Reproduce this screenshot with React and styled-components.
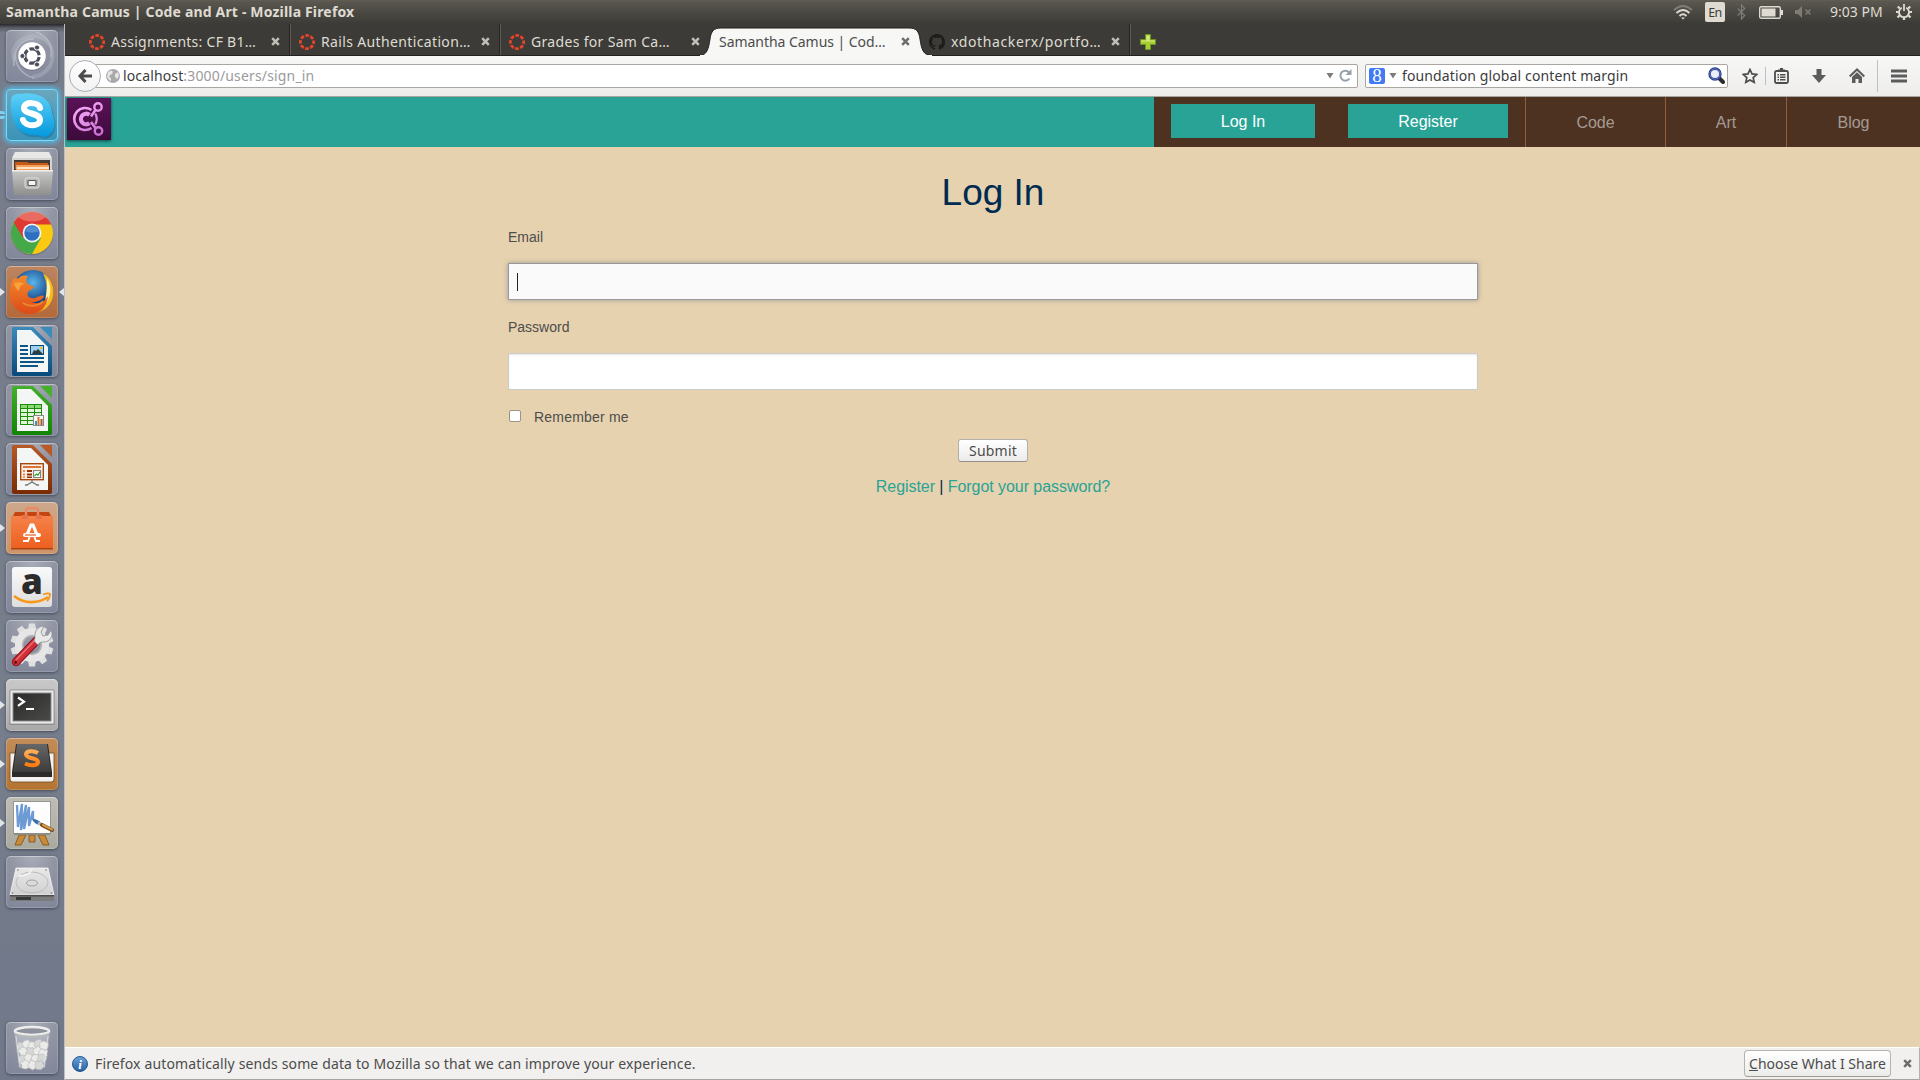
import React from 'react';
import styled, { createGlobalStyle } from 'styled-components';

const Global = createGlobalStyle`
  *, *::before, *::after { box-sizing: border-box; }
  html, body { margin: 0; padding: 0; }
  body { overflow: hidden; background: #e6d2af; }
  svg { display: block; flex: none; }
`;

const ui = `"Noto Sans", "Open Sans", sans-serif`;
const page = `"Liberation Sans", Arial, sans-serif`;

const Screen = styled.div`
  width: 1920px;
  height: 1080px;
  display: flex;
  flex-direction: column;
  font-family: ${ui};
  font-size: 14px;
  line-height: 20px;
`;

const Label = styled.span`
  font-size: ${(p) => p.$size || 14}px;
  letter-spacing: ${(p) => p.$track || 0}px;
  color: ${(p) => p.$color || 'inherit'};
  font-weight: ${(p) => p.$weight || 400};
  white-space: nowrap;
  flex: none;
`;

/* ---------- top panel ---------- */

const Panel = styled.header`
  height: 24px;
  flex: none;
  display: flex;
  align-items: center;
  padding: 0 8px 0 6px;
  color: #dfdbd2;
  background: linear-gradient(#65624f 0, #5a5850 1px, #4b4943 12px, #3c3b37 24px);
`;

const Tray = styled.div`
  margin-left: auto;
  display: flex;
  align-items: center;
`;

const TraySlot = styled.div`
  width: ${(p) => p.$w}px;
  height: 24px;
  display: flex;
  align-items: center;
`;

const Lang = styled.div`
  width: 20px;
  height: 20px;
  margin-top: -1px;
  border-radius: 2px;
  background: #dfdbd2;
  color: #3c3b37;
  font-size: 12.5px;
  letter-spacing: -0.6px;
  line-height: 21px;
  text-align: center;
`;

const Below = styled.div`
  flex: 1;
  display: flex;
  min-height: 0;
`;

/* ---------- launcher ---------- */

const Launcher = styled.aside`
  width: 65px;
  flex: none;
  display: flex;
  flex-direction: column;
  gap: 7px;
  padding: 6px 0 6px 6px;
  border-right: 1px solid #b9bfca;
  background: linear-gradient(#26272a 0, #5b606a 4px, #777d8b 9px, #767d8b 70%, #70788a 100%);
`;

const Tile = styled.div`
  position: relative;
  width: 52px;
  height: 52px;
  flex: none;
  border-radius: 5px;
  background: ${(p) => p.$bg || 'radial-gradient(circle at 50% 0, #a9adb8 0, #9195a3 40%, #80859a 100%)'};
  box-shadow: ${(p) =>
    p.$glow
      ? 'inset 0 0 0 1px #7fd6f5, 0 0 5px 2px #4fb9e4'
      : 'inset 0 0 0 1px rgba(255,255,255,0.17), inset 0 1px 0 rgba(255,255,255,0.25), 0 1px 3px rgba(30,34,48,0.55)'};
  margin-top: ${(p) => (p.$last ? 'auto' : 0)};
`;

const Pip = styled.i`
  position: absolute;
  top: 22px;
  left: ${(p) => (p.$right ? 'auto' : '-6px')};
  right: ${(p) => (p.$right ? '-6px' : 'auto')};
  border: 4px solid transparent;
  border-left: ${(p) => (p.$right ? '0' : '5px solid #e3e4e8')};
  border-right: ${(p) => (p.$right ? '5px solid #e3e4e8' : '0')};
`;

const Bars = styled.i`
  position: absolute;
  top: 22px;
  left: -6px;
  width: 5px;
  height: 8px;
  border: solid #7ed2f0;
  border-width: 3px 0;
  border-radius: 0 3px 3px 0;
`;

const Art = ({ children }) => (
  <svg width="52" height="52" viewBox="0 0 52 52">{children}</svg>
);

const Grad = ({ id, a, b, x2 = 0, y2 = 1 }) => (
  <linearGradient id={id} x1="0" y1="0" x2={x2} y2={y2}>
    <stop offset="0" stopColor={a} />
    <stop offset="1" stopColor={b} />
  </linearGradient>
);

const UbuntuIcon = () => (
  <Art>
    <g fill="none" stroke="#d4d6df" opacity="0.5">
      <path d="M8 30C4 12 22 2 36 8c8 4 12 12 10 22-2 10-10 16-20 17" strokeWidth="4" opacity=".5" />
      <path d="M30 2c12 4 17 14 15 25M10 20c-3 14 6 25 18 28M8 36C6 20 16 8 28 9" strokeWidth="1.6" />
    </g>
    <circle cx="26" cy="27" r="14" fill="#5f6270" opacity=".35" />
    <circle cx="26" cy="26" r="13.8" fill="#fff" />
    <circle cx="26" cy="26" r="7.2" fill="none" stroke="#4d4e5c" strokeWidth="3.2" strokeDasharray="13 2.08" strokeDashoffset="-1" />
    <g fill="#4d4e5c" stroke="#fff" strokeWidth="1">
      <circle cx="16.4" cy="26" r="2.6" />
      <circle cx="31" cy="17.5" r="2.6" />
      <circle cx="31" cy="34.5" r="2.6" />
    </g>
  </Art>
);

const SkypeIcon = () => (
  <Art>
    <defs><Grad id="sk" a="#5fd0f7" b="#0499dd" /></defs>
    <path d="M5 15C3 8 8 4 15 5c4-1 8-1 12 0 11 1 19 9 19 19 3 8 4 14 0 20-3 5-9 6-14 3C20 49 9 42 7 29 5 24 5 20 5 15z" fill="#1b6d94" opacity=".5" transform="translate(1 1)" />
    <path d="M5 13C4 7 9 4 15 5c4-1 8-1 12 0 11 1 19 9 19 19 3 8 4 14 0 19-3 5-9 6-14 3C20 48 9 41 7 29 5 23 4 18 5 13z" fill="url(#sk)" />
    <path d="M34 19C33 13 18 12 18 19c0 7 16 4 16 12 0 7-15 7-17 0" fill="none" stroke="#fff" strokeWidth="6" strokeLinecap="round" />
  </Art>
);

const FilesIcon = () => (
  <Art>
    <defs><Grad id="fl" a="#c9c9c7" b="#8f8f8d" /></defs>
    <path d="M9 4h34l3 6v12H6V10z" fill="#e8e8e6" />
    <path d="M6 10h40v12H6z" fill="#d4d4d1" />
    <path d="M8 12h36v12H8z" fill="#453b36" />
    <path d="M9 14h12l2 1h19v6H9z" fill="#c65a16" />
    <path d="M10 17h33v6H10z" fill="#f2a15c" />
    <path d="M11 19h32v2H11z" fill="#fde3c4" />
    <path d="M6 22h41l-2 25H8z" fill="url(#fl)" />
    <path d="M6 22h41v1.5H6z" fill="#eee" />
    <rect x="19" y="30" width="14" height="10" rx="2" fill="#b4b4b2" stroke="#dededc" />
    <rect x="22" y="32.5" width="8" height="5" rx="1" fill="#f3f3f2" stroke="#595959" strokeWidth="1.2" />
  </Art>
);

const ChromeIcon = () => (
  <Art>
    <circle cx="26" cy="27.5" r="21" fill="#444" opacity=".3" />
    <circle cx="26" cy="26" r="21" fill="#fbc90f" />
    <path d="M26 26L7.8 15.5A21 21 0 0 0 26 47l9-16z" fill="#45a94a" />
    <path d="M7.8 15.5A21 21 0 0 1 45.3 17.5H26L17 31z" fill="#df3a32" />
    <path d="M12 10a21 21 0 0 1 28 0c-8 6-20 6-28 0z" fill="#f08a80" opacity=".6" />
    <circle cx="26" cy="26" r="9.4" fill="#f3f3f3" />
    <circle cx="26" cy="26" r="7.7" fill="#2d6fc0" />
    <path d="M19 24a7.5 7.5 0 0 1 14 0c-4 2-10 2-14 0z" fill="#6ea4dd" opacity=".6" />
  </Art>
);

const FirefoxIcon = () => (
  <Art>
    <defs>
      <radialGradient id="fb" cx=".5" cy=".3"><stop offset="0" stopColor="#5ab6e8" /><stop offset="1" stopColor="#123a82" /></radialGradient>
      <Grad id="ff" a="#f58a2c" b="#dc4a18" />
    </defs>
    <ellipse cx="27" cy="25" rx="20.5" ry="21" fill="url(#fb)" />
    <path d="M37 7c7 4 10 11 10.500 17C48 37 40 46 27 47c8-4 13-9 14-16 1-8-1-17-4-24z" fill="#f6b820" />
    <path d="M41 12c3 5 4 10 3 16-1 5-3 9-6 12 2-8 3-17 3-28z" fill="#fff3a8" />
    <path d="M7 13c2-1 4 0 6-1 2-3 6-3 9-2-2 2-2 4-1 7 2 3 6 2 7 4 0 2-5 3-6 5-2 4 2 7 7 6 4-2 8-3 9-2-1 4-7 6-12 6 7 3 12 0 16-6-1 11-8 18-18 18C12 48 4 39 4 28c0-6 1-11 3-15z" fill="url(#ff)" />
    <path d="M8 17c3-1 8-1 10 1-3 1-5 3-5 7-3-2-4-4-5-8z" fill="#f9a13a" />
    <path d="M17 37c6 4 15 4 20-2" stroke="#f9a13a" strokeWidth="2" fill="none" opacity=".6" />
  </Art>
);

const Doc = ({ id, dark, light, children }) => (
  <Art>
    <defs><Grad id={id} a={light} b={dark} /></defs>
    <path d="M7 2h20l19 19v28a2 2 0 0 1-2 2H8a2 2 0 0 1-2-2V3z" fill={`url(#${id})`} />
    <path d="M34 2h12v12z" fill={light} />
    <path d="M11 5h14l17 17v25H11z" fill="#f4f5f5" />
    {children}
  </Art>
);

const WriterIcon = () => (
  <Doc id="wr" dark="#084a7a" light="#3c8bbd">
    <g fill="#0e5688">
      <path d="M14 20h8v2h-8zM14 24h8v2h-8zM14 28h8v2h-8zM14 32h24v2H14zM14 36h24v2H14zM14 40h18v2H14z" />
    </g>
    <rect x="24.5" y="20.5" width="13" height="9" fill="#9cd0ee" stroke="#084a7a" />
    <path d="M26 29l2-4 2 1 2-2 2 2 3 3z" fill="#2f3a40" />
    <circle cx="35" cy="23" r="1.3" fill="#f5bc2a" />
  </Doc>
);

const CalcIcon = () => (
  <Doc id="ca" dark="#118402" light="#44b02d">
    <rect x="14" y="20" width="22" height="21" fill="#1c8c0c" />
    {[0, 1, 2, 3, 4].map((r) =>
      [0, 1, 2].map((c) => <rect key={`${r}${c}`} x={15 + c * 7} y={21 + r * 4} width="6" height="3" fill={r === 0 ? '#8fd878' : '#dff7d6'} />)
    )}
    <rect x="27.5" y="31.5" width="10" height="10" fill="#f6f6f6" stroke="#8a8a8a" />
    <path d="M29 37h2v4h-2z" fill="#3c8dc8" />
    <path d="M31.5 33h2v8h-2z" fill="#e0701c" />
    <path d="M34.5 35h2v6h-2z" fill="#9a5a2e" />
  </Doc>
);

const ImpressIcon = () => (
  <Doc id="im" dark="#7a2a02" light="#b75a28">
    <rect x="14.7" y="20.7" width="22.6" height="16" fill="#fdeee4" stroke="#a5450f" strokeWidth="1.4" />
    <path d="M17 23h18v2H17z" fill="#d9763c" />
    <path d="M17 27h2v2h-2zM17 30.5h2v2h-2zM17 33.5h2v1.5h-2z" fill="#e28a54" />
    <path d="M21 27h5v2h-5zM21 30.5h5v2h-5zM21 33.5h5v1.5h-5z" fill="#8b3509" />
    <rect x="27.6" y="27.6" width="7" height="7" fill="#fff" stroke="#777" />
    <path d="M28.5 33l2-2 1.5 1 2-3" stroke="#32a32a" strokeWidth="1.3" fill="none" />
    <path d="M26 37v3M21 42l5-3 5 3M19 42h3M30 42h3" stroke="#777" strokeWidth="1.4" fill="none" />
  </Doc>
);

const SoftwareIcon = () => (
  <Art>
    <defs><Grad id="so" a="#f5824a" b="#ee5f1e" /></defs>
    <path d="M7 14l2-4h34l2 4z" fill="#c44512" />
    <path d="M5 14h42v33H5z" fill="url(#so)" />
    <path d="M5 46h42v1.5H5z" fill="#a84412" />
    <path d="M20 15V9q0-3 3-3h6q3 0 3 3v6" fill="none" stroke="#e98a66" strokeWidth="2.4" />
    <path d="M16 13h6v4h-6zM30 13h6v4h-6z" fill="#e4734a" />
    <path d="M20.500 34L25 23h2l4.500 11" fill="none" stroke="#fff" strokeWidth="3.2" />
    <rect x="17" y="31" width="18" height="4" rx="2" fill="#fff" />
    <path d="M17 39h5l1.500-4M34 39h-4l-1.500-4" stroke="#fff" strokeWidth="2" fill="none" />
    <path d="M19 33h11" stroke="#ee6a2b" strokeWidth="1.3" />
  </Art>
);

const AmazonIcon = () => (
  <Art>
    <defs><Grad id="am" a="#fafafa" b="#dedede" /></defs>
    <rect x="6" y="6" width="40" height="40" rx="3" fill="url(#am)" />
    <text x="26" y="33" fontFamily="Open Sans, sans-serif" fontWeight="800" fontSize="35" textAnchor="middle" fill="#2b2b2b">a</text>
    <path d="M8 35c10 8 24 8 34 1" fill="none" stroke="#f7981d" strokeWidth="2.6" />
    <path d="M37 33.5c3-1 6-1.500 7-.5 0 2-1 5-3 7" fill="none" stroke="#f7981d" strokeWidth="1.8" />
  </Art>
);

const SettingsIcon = () => (
  <Art>
    <g transform="translate(26 25)">
      <g fill="#e0e0e0">
        {[0, 36, 72, 108, 144, 180, 216, 252, 288, 324].map((a) => (
          <path key={a} d="M-4-15L-3-21.500h6L4-15z" transform={`rotate(${a})`} />
        ))}
      </g>
      <circle r="13" fill="none" stroke="#e6e6e6" strokeWidth="8" />
      <circle r="9.5" fill="none" stroke="#b4b4b4" strokeWidth="1.4" />
    </g>
    <path d="M10 42L33 18" stroke="#8c1019" strokeWidth="8.4" strokeLinecap="round" />
    <path d="M10 42L31 20" stroke="#cf2f37" strokeWidth="6.4" strokeLinecap="round" />
    <path d="M10 40L30 19" stroke="#ee7076" strokeWidth="1.4" />
    <circle cx="9.6" cy="42.4" r="1.4" fill="#5a0b10" />
    <path d="M29 18c-1-7 3-12 9-12l-3 6 2 4 5-1 3-5c3 6-1 12-7 12-3 0-4 0-6 3l-4-4z" fill="#e9e9e9" stroke="#8d8d8d" strokeWidth=".8" />
  </Art>
);

const TerminalIcon = () => (
  <Art>
    <defs><Grad id="te" a="#2a2a2a" b="#4a4a48" x2={1} /></defs>
    <path d="M4 11h44v31l1 4H3l1-4z" fill="#9a9a9a" />
    <rect x="4" y="11" width="44" height="34" rx="1" fill="#ebebeb" stroke="#777" strokeWidth=".7" />
    <rect x="7" y="14" width="38" height="28" fill="url(#te)" stroke="#888" />
    <path d="M12 18.5l6 4.2-6 4.2" fill="none" stroke="#fff" strokeWidth="2.2" />
    <path d="M20 30h8" stroke="#fff" strokeWidth="2" />
  </Art>
);

const SublimeIcon = () => (
  <Art>
    <defs><Grad id="su" a="#666" b="#3c3c3c" /><Grad id="ss" a="#ffae55" b="#ff7b0c" /></defs>
    <path d="M4 15h44v26a3 3 0 0 1-3 3H7a3 3 0 0 1-3-3z" fill="#f2f1ef" stroke="#6b4a26" strokeWidth=".8" />
    <path d="M10 6h32l4 28v5H6v-5z" fill="#2a2a2a" />
    <path d="M11 6h30l4 28H7z" fill="url(#su)" />
    <path d="M32 15c-5-3-12-2-12 1.500 0 4.500 12 3 12 7.500 0 4-8 4-13 1.500" fill="none" stroke="url(#ss)" strokeWidth="4" />
  </Art>
);

const PaintIcon = () => (
  <Art>
    <path d="M13 38h7l-5 10H9zM32 38h7l4 10h-6zM23 38h6v7h-6z" fill="#c98a3b" stroke="#7d4f16" strokeWidth=".8" />
    <rect x="7.5" y="4.5" width="37" height="32" fill="#fdfdfd" stroke="#96968f" />
    <path d="M8 36h36v2H8z" fill="#8d8d86" />
    <path d="M11 8l1 22 4-23-1 26 5-25-2 24 5-22 0 19 4-15v8" fill="none" stroke="#6b9ad4" strokeWidth="2.3" strokeLinejoin="bevel" />
    <path d="M26 22c4 0 9 2 9 5-3 2-7-1-9-5z" fill="#3a6ea8" />
    <path d="M32 26l5 2" stroke="#b3bac0" strokeWidth="3.4" />
    <path d="M36 28l10 5" stroke="#7d4f16" strokeWidth="4" strokeLinecap="round" />
    <path d="M37 28l9 4.5" stroke="#d3994d" strokeWidth="2" strokeLinecap="round" />
  </Art>
);

const DiskIcon = () => (
  <Art>
    <defs><Grad id="dk" a="#e8e8e8" b="#d0d0d0" /></defs>
    <path d="M10 12h32l6 27H4z" fill="url(#dk)" stroke="#f5f5f5" strokeWidth=".8" />
    <path d="M4 39h44v6H4z" fill="#7b7b7b" />
    <path d="M4 39h44v1.5H4z" fill="#4c4c4c" />
    <path d="M10 41h15v3H10z" fill="#383838" />
    <ellipse cx="26" cy="26.5" rx="16" ry="10.5" fill="none" stroke="#bcbcbc" />
    <ellipse cx="26" cy="27" rx="5.5" ry="3" fill="#dadada" stroke="#a3a3a3" />
    <path d="M12 20c6 0 12-1 14-7" stroke="#f6f6f6" strokeWidth="1.4" fill="none" />
    <g fill="#777"><circle cx="12" cy="14" r=".8" /><circle cx="40" cy="14" r=".8" /><circle cx="6.5" cy="37" r=".8" /><circle cx="45.5" cy="37" r=".8" /></g>
  </Art>
);

const CRUMPLES = [
  [15, 24], [21, 22], [27, 24], [33, 22], [38, 24], [17, 30], [24, 30], [31, 29], [37, 31],
  [17, 37], [23, 36], [30, 37], [36, 37], [19, 43], [26, 43], [33, 43],
];

const TrashIcon = () => (
  <Art>
    <path d="M8 9h36l-5 37H13z" fill="#c9ced6" opacity=".5" />
    {CRUMPLES.map(([x, y], i) => (
      <path
        key={i}
        transform={`translate(${x} ${y}) rotate(${i * 47})`}
        d="M-4-1l2-3 3 1 3-1v4l1 2-4 3-3-1-2-1z"
        fill={i % 3 ? '#ebebe9' : '#d7d8d6'}
        stroke="#b9bcba"
        strokeWidth=".6"
      />
    ))}
    <path d="M10 14l4 31M42 14l-4 31" stroke="#eef0f3" strokeWidth=".9" opacity=".7" />
    <ellipse cx="26" cy="9" rx="17" ry="4" fill="#8c929c" stroke="#eeeeec" strokeWidth="2.6" />
    <path d="M8.500 10.500c5 4 30 4 35 0v1.500c-5 4.500-30 4.500-35 0z" fill="#b7bab9" />
  </Art>
);

const LAUNCHER = [
  { icon: UbuntuIcon },
  { icon: SkypeIcon, bg: 'linear-gradient(#6ba7bd, #3a93b8)', glow: true },
  { icon: FilesIcon },
  { icon: ChromeIcon },
  { icon: FirefoxIcon, bg: 'linear-gradient(#bc8560, #b3693a)', pips: 2 },
  { icon: WriterIcon },
  { icon: CalcIcon },
  { icon: ImpressIcon },
  { icon: SoftwareIcon, bg: 'linear-gradient(#cda88c, #cd9467)', pips: 1 },
  { icon: AmazonIcon },
  { icon: SettingsIcon },
  { icon: TerminalIcon, bg: 'linear-gradient(#c9c9c9, #a9a9a9)', pips: 1 },
  { icon: SublimeIcon, bg: 'linear-gradient(#c28c5a, #b57531)', pips: 1 },
  { icon: PaintIcon, bg: 'linear-gradient(#bdbdb6, #aaaaa0)', pips: 1 },
  { icon: DiskIcon },
  { icon: TrashIcon, last: true },
];

/* ---------- browser ---------- */

const Browser = styled.div`
  flex: 1;
  display: flex;
  flex-direction: column;
  min-width: 0;
`;

const TabStrip = styled.div`
  height: 32px;
  flex: none;
  display: flex;
  padding-left: 16px;
  background: #3c3b37;
  border-bottom: 1px solid #22211f;
`;

const Tab = styled.div`
  position: relative;
  width: 210px;
  height: ${(p) => (p.$active ? 32 : 31)}px;
  display: flex;
  align-items: center;
  padding: 4px 0 0 8px;
  color: ${(p) => (p.$active ? '#4c4c4c' : '#dfdbd2')};
  border-right: ${(p) => (p.$plain ? '0' : '1px solid #5e5c53')};
  box-shadow: ${(p) => (p.$plain ? 'none' : 'inset -1px 0 #272623')};
`;

const TabShape = styled.svg`
  position: absolute;
  left: -12px;
  top: 3px;
`;

const TabText = styled(Label)`
  position: relative;
  margin-left: ${(p) => (p.$flush ? 0 : 6)}px;
`;

const TabClose = styled.span`
  position: absolute;
  left: 190px;
  top: 13px;
`;

const NewTab = styled.div`
  padding: 10px 0 0 9px;
`;

const Toolbar = styled.div`
  height: 41px;
  flex: none;
  display: flex;
  align-items: center;
  padding: 0 13px 1px 4px;
  background: linear-gradient(#f7f7f6, #eeedec);
  border-bottom: 1px solid #a9a6a1;
`;

const Back = styled.div`
  position: relative;
  width: 32px;
  height: 32px;
  border-radius: 50%;
  border: 1px solid #a9b0b8;
  background: linear-gradient(#fff, #f2f2f2);
  display: flex;
  align-items: center;
  justify-content: center;
  z-index: 1;
`;

const Field = styled.div`
  height: 24px;
  width: ${(p) => p.$w}px;
  margin-left: ${(p) => p.$ml}px;
  padding: 0 ${(p) => p.$pr}px 0 ${(p) => p.$pl}px;
  display: flex;
  align-items: center;
  background: #fff;
  border: 1px solid #aaa7a3;
  border-radius: 2px;
  color: #3c3c3c;
`;

const Google = styled.span`
  width: 16px;
  height: 16px;
  border-radius: 2px;
  background: #4279f4;
  color: #fff;
  font: 19px/15px "Liberation Serif", serif;
  text-align: center;
`;

const Gap = styled.span`
  width: ${(p) => p.$w}px;
  flex: none;
`;

const Push = styled.span`
  flex: 1;
`;

const Rule = styled.span`
  width: 1px;
  height: ${(p) => p.$h}px;
  background: #b8c2cf;
`;

/* ---------- page ---------- */

const Page = styled.main`
  flex: 1;
  background: #e6d2af;
  font-family: ${page};
`;

const SiteNav = styled.nav`
  height: 50px;
  display: flex;
  background: #29a396;
`;

const Brand = styled.div`
  width: 44px;
  height: 42px;
  margin: 1px 0 0 2px;
  background: linear-gradient(#5a1257, #3d0a3b);
  box-shadow: 0 1px 3px rgba(0, 0, 0, 0.6);
`;

const NavSide = styled.div`
  width: 766px;
  margin-left: auto;
  display: flex;
  background: #4d3222;
  font-size: 16px;
`;

const NavButton = styled.a`
  width: ${(p) => p.$w}px;
  height: 34px;
  margin: 7px ${(p) => p.$mr}px 0 17px;
  background: #29a396;
  color: #fff;
  line-height: 35px;
  text-align: center;
`;

const NavLink = styled.a`
  width: ${(p) => p.$w}px;
  border-left: 1px solid #935d3c;
  color: #a59a92;
  line-height: 51px;
  text-align: center;
`;

const Form = styled.form`
  width: 970px;
  margin: 0 0 0 443px;
  display: flex;
  flex-direction: column;
  font-size: 14px;
  line-height: 21px;
  color: #4d4d4d;
`;

const Heading = styled.h1`
  margin: 20px 0 8px;
  font-size: 37px;
  font-weight: 400;
  line-height: 52px;
  text-align: center;
  color: #002b51;
`;

const FieldLabel = styled.label`
  height: 21px;
  margin-bottom: 15px;
`;

const Input = styled.div`
  height: 37px;
  margin-bottom: 17px;
  padding: 9px 8px;
  border: 1px solid ${(p) => (p.$focus ? '#999' : '#ccc')};
  background: ${(p) => (p.$focus ? '#fafafa' : '#fff')};
  box-shadow: ${(p) => (p.$focus ? '0 0 5px #999' : 'inset 0 1px 2px rgba(0,0,0,0.1)')};
`;

const Caret = styled.span`
  display: block;
  width: 1px;
  height: 18px;
  background: #222;
`;

const Remember = styled.label`
  height: 21px;
  display: flex;
  align-items: center;
  letter-spacing: 0.2px;
`;

const Check = styled.span`
  width: 12px;
  height: 12px;
  margin: -4px 13px 0 1px;
  border: 1px solid #98938b;
  border-radius: 2px;
  background: #fff;
`;

const Submit = styled.button`
  align-self: center;
  width: 70px;
  height: 23px;
  margin: 11px 0 0;
  padding: 0;
  border: 1px solid #b3b0ab;
  border-bottom-color: #94918c;
  border-radius: 3px;
  background: linear-gradient(#fff, #ebebeb);
  color: #4c4c4c;
  font: 14px/20px ${ui};
  letter-spacing: 0.2px;
`;

const Links = styled.div`
  margin-top: 13px;
  font-size: 16px;
  line-height: 24px;
  letter-spacing: -0.06px;
  text-align: center;
  color: #002b51;
`;

const TextLink = styled.a`
  color: #29a396;
`;

const Notice = styled.footer`
  height: 33px;
  flex: none;
  display: flex;
  align-items: center;
  padding: 0 7px 0 7px;
  color: #4c4c4c;
  background: #f1f0ee;
  border-top: 1px solid #fff;
  border-bottom: 1px solid #a7a49d;
  border-right: 1px solid #b3b0aa;
`;

const Choose = styled.button`
  width: 147px;
  height: 27px;
  margin: 0 12px 0 auto;
  padding: 0;
  border: 1px solid #b6b3ae;
  border-bottom-color: #a09d98;
  border-radius: 4px;
  background: linear-gradient(#fff, #ebebea);
  color: #4c4c4c;
  font: 14px/24px ${ui};
`;

const Cross = ({ color }) => (
  <svg width="9" height="9" viewBox="0 0 9 9">
    <path d="M1.2 1.2l6.6 6.6M7.8 1.2L1.200 7.800" stroke={color} strokeWidth="2.5" />
  </svg>
);

const Canvas = () => (
  <svg width="16" height="16" viewBox="0 0 16 16">
    <circle cx="8" cy="8" r="6.6" fill="none" stroke="#e8442a" strokeWidth="2.8" strokeDasharray="3.700 1.484" strokeDashoffset="1.850" />
  </svg>
);

const Octocat = () => (
  <svg width="16" height="16" viewBox="0 0 16 16">
    <path fill="#1d1c1b" d="M8 0C3.580 0 0 3.580 0 8c0 3.540 2.290 6.530 5.470 7.590.4.070.55-.17.55-.38 0-.19-.01-.82-.01-1.490-2.010.37-2.530-.49-2.690-.94-.09-.23-.48-.94-.82-1.130-.28-.15-.68-.52-.01-.53.63-.01 1.080.58 1.230.82.72 1.210 1.870.87 2.330.66.070-.52.28-.87.51-1.070-1.780-.2-3.640-.89-3.640-3.950 0-.87.31-1.590.82-2.150-.08-.2-.36-1.020.08-2.120 0 0 .67-.21 2.200.82.64-.18 1.320-.27 2-.27s1.360.09 2 .27c1.530-1.040 2.200-.82 2.200-.82.44 1.100.16 1.920.08 2.120.51.56.82 1.270.82 2.150 0 3.070-1.870 3.750-3.650 3.950.29.25.54.73.54 1.480 0 1.070-.01 1.930-.01 2.200 0 .21.15.46.55.38A8.010 8.010 0 0 0 16 8c0-4.420-3.580-8-8-8z" />
  </svg>
);

const Triangle = () => (
  <svg width="8" height="7" viewBox="0 0 8 7">
    <path d="M.5 1h7L4 6.500z" fill="#7b7b7b" />
  </svg>
);

const TABS = [
  { text: 'Assignments: CF B1…', icon: Canvas, track: 0.27 },
  { text: 'Rails Authentication…', icon: Canvas, track: 0.36 },
  { text: 'Grades for Sam Ca…', icon: Canvas, track: 0.32, plain: true },
  { text: 'Samantha Camus | Cod…', active: true, plain: true, track: -0.04 },
  { text: 'xdothackerx/portfo…', icon: Octocat, track: 0.62 },
];

const TopPanel = () => (
  <Panel>
    <Label $weight={700} $track={0.17}>Samantha Camus | Code and Art - Mozilla Firefox</Label>
    <Tray>
      <TraySlot $w={32}>
        <svg width="20" height="16" viewBox="0 0 20 16" fill="none" strokeWidth="1.8">
          <path d="M1 6q9-8 18 0" stroke="#7e7c75" />
          <path d="M3.500 9q6.500-6 13 0M6.500 12q3.500-3.500 7 0" stroke="#dfdbd2" />
          <path d="M8 13.500h4l-2 2z" fill="#dfdbd2" />
        </svg>
      </TraySlot>
      <TraySlot $w={32}><Lang>En</Lang></TraySlot>
      <TraySlot $w={22}>
        <svg width="9" height="16" viewBox="0 0 9 16">
          <path d="M.7 4.500l7 7L4.500 15V1l3.200 3.500-7 7" fill="none" stroke="#7e7c75" strokeWidth="1.2" />
        </svg>
      </TraySlot>
      <TraySlot $w={36}>
        <svg width="24" height="13" viewBox="0 0 24 13">
          <rect x=".7" y=".7" width="20.6" height="11.6" rx="1.5" fill="none" stroke="#dfdbd2" strokeWidth="1.4" />
          <path d="M2.500 2.500h14v8h-14z" fill="#dfdbd2" />
          <path d="M22 4h2v5h-2z" fill="#dfdbd2" />
        </svg>
      </TraySlot>
      <TraySlot $w={35}>
        <svg width="18" height="12" viewBox="0 0 18 12">
          <path d="M0 4h3l4-4v12L3 8H0z" fill="#7e7c75" />
          <path d="M10.500 3.500l5 5M15.500 3.500l-5 5" stroke="#7e7c75" strokeWidth="1.5" />
        </svg>
      </TraySlot>
      <TraySlot $w={66}><Label $track={0}>9:03 PM</Label></TraySlot>
      <svg width="16" height="16" viewBox="0 0 16 16" stroke="#dfdbd2" fill="none">
        <path d="M5.800 3.700a5 5 0 1 0 4.400 0" strokeWidth="1.8" />
        <path d="M8 0v7" strokeWidth="1.8" />
        <path d="M3.500 11.500l-2 2M12.500 11.500l2 2M2.800 8H0M16 8h-2.800M3.800 4.500l-2-2M12.200 4.500l2-2M8 13v3" strokeWidth="2.2" />
      </svg>
    </Tray>
  </Panel>
);

const Tabs = () => (
  <TabStrip>
    {TABS.map(({ text, icon: Icon, active, plain, track }) => (
      <Tab key={text} $active={active} $plain={plain}>
        {active && (
          <TabShape width="234" height="29" viewBox="0 0 234 29">
            <path d="M0 28.500C8 28.500 9.500 22 11 12 12 4 15 1 22 1H210C217 1 220 4 221 12c1.500 10 3 16.500 12 16.500z" fill="#f7f7f6" stroke="#22211f" strokeWidth="1" />
            <path d="M1 28h232v1H1z" fill="#f7f7f6" />
          </TabShape>
        )}
        {Icon && <Icon />}
        <TabText $flush={active} $track={track}>{text}</TabText>
        <TabClose><Cross color={active ? '#6d6d6b' : '#c4c0b8'} /></TabClose>
      </Tab>
    ))}
    <NewTab>
      <svg width="16" height="16" viewBox="0 0 16 16">
        <path d="M5.500.5h5v5h5v5h-5v5h-5v-5h-5v-5h5z" fill="#a6cf35" stroke="#6f9426" />
        <path d="M6.500 1.500h3v5h5v1h-13v-1h5z" fill="#d5ea7c" />
      </svg>
    </NewTab>
  </TabStrip>
);

const NavToolbar = () => (
  <Toolbar>
    <Back>
      <svg width="16" height="16" viewBox="0 0 16 16">
        <path d="M8.500 2L3 8l5.500 6M3 8h12" fill="none" stroke="#4c4c4c" strokeWidth="3" />
      </svg>
    </Back>
    <Field $w={1267} $ml={-10} $pl={14} $pr={5}>
      <svg width="14" height="14" viewBox="0 0 14 14">
        <circle cx="7" cy="7" r="7" fill="#a9a9a9" />
        <path d="M2 3l3-1.500 2 1-1 2.500-2 1-1 2 2 1v3l-2-1-2-3zM9 5l3-2 1 4-2 3-2-2z" fill="#e6e6e6" />
      </svg>
      <Gap $w={3} />
      <Label $track={0.13}>localhost</Label>
      <Label $track={0.16} $color="#9b9b9b">:3000/users/sign_in</Label>
      <Push />
      <Triangle />
      <Gap $w={5} />
      <svg width="13" height="13" viewBox="0 0 13 13">
        <path d="M10.500 9.500A5 5 0 1 1 10.300 3.500" fill="none" stroke="#96a0ac" strokeWidth="2" />
        <path d="M12.500 0v6h-6z" fill="#96a0ac" />
      </svg>
    </Field>
    <Field $w={363} $ml={7} $pl={3} $pr={2}>
      <Google>8</Google>
      <Gap $w={4} />
      <Triangle />
      <Gap $w={5} />
      <Label $track={0.12}>foundation global content margin</Label>
      <Push />
      <svg width="17" height="17" viewBox="0 0 17 17">
        <path d="M11 11l4 4" stroke="#2c2c2c" strokeWidth="4" strokeLinecap="round" />
        <circle cx="7" cy="7" r="5.4" fill="#e9f0fa" stroke="#2c3f8f" strokeWidth="2.6" />
        <circle cx="7" cy="7" r="5.2" fill="none" stroke="#6d80cc" strokeWidth=".8" />
      </svg>
    </Field>
    <Gap $w={14} />
    <svg width="16" height="16" viewBox="0 0 16 16">
      <path d="M8 1.500l2 4.400 4.800.5-3.600 3.200 1 4.700L8 12l-4.200 2.300 1-4.700L1.200 6.400 6 5.900z" fill="none" stroke="#4c4c4c" strokeWidth="1.7" />
    </svg>
    <Gap $w={7} />
    <Rule $h={18} />
    <Gap $w={8} />
    <svg width="15" height="16" viewBox="0 0 15 16">
      <rect x="1" y="3" width="13" height="12" rx="1.5" fill="none" stroke="#4c4c4c" strokeWidth="1.8" />
      <path d="M4 1.500h2V0h3v1.500h2V4H4zM3.500 6h1.500v1.400H3.500zM6 6h5.500v1.400H6zM3.500 8.500h1.500v1.400H3.500zM6 8.500h5.500v1.400H6zM3.500 11h1.500v1.400H3.500zM6 11h5.500v1.400H6z" fill="#4c4c4c" />
    </svg>
    <Gap $w={23} />
    <svg width="14" height="16" viewBox="0 0 14 16">
      <path d="M4.500 1h5v6H14l-7 8-7-8h4.500z" fill="#5c5c5c" />
    </svg>
    <Gap $w={23} />
    <svg width="16" height="16" viewBox="0 0 16 16">
      <path d="M.7 8.500L8 1.500l7.300 7" fill="none" stroke="#5c5c5c" strokeWidth="2" />
      <path d="M3 9l5-4.800L13 9v6H9.500v-4h-3v4H3z" fill="#5c5c5c" />
    </svg>
    <Gap $w={12} />
    <Rule $h={32} />
    <Gap $w={13} />
    <svg width="16" height="14" viewBox="0 0 16 14">
      <path d="M0 .5h16v3H0zM0 5.500h16v3H0zM0 10.500h16v3H0z" fill="#5c5c5c" />
    </svg>
  </Toolbar>
);

const BrandMark = () => (
  <svg width="44" height="42" viewBox="0 0 44 42" fill="none">
    <defs>
      <linearGradient id="bm" gradientUnits="userSpaceOnUse" x1="10" y1="4" x2="34" y2="40">
        <stop offset="0" stopColor="#ffb4ff" />
        <stop offset="1" stopColor="#c168cc" />
      </linearGradient>
    </defs>
    <g stroke="url(#bm)">
      <path d="M24.500 12A11 11 0 1 0 24.500 30" strokeWidth="2.6" />
      <path d="M28.300 15.500q3 5.500 0 11" strokeWidth="2.2" />
      <path d="M22.500 16.800A5.300 5.300 0 1 0 22.500 25.200" strokeWidth="4.2" />
      <circle cx="31" cy="9" r="3.7" strokeWidth="2.4" />
      <circle cx="31.500" cy="33" r="3.7" strokeWidth="2.4" />
      <path d="M28.500 12l-4.500 6.500M28.700 30.200l-4.700-6.200" strokeWidth="2.6" />
    </g>
  </svg>
);

const InfoIcon = () => (
  <svg width="16" height="16" viewBox="0 0 16 16">
    <defs><Grad id="inf" a="#6ba2d8" b="#2661a0" /></defs>
    <circle cx="8" cy="8" r="7.5" fill="url(#inf)" stroke="#235a94" />
    <text x="8" y="12.5" fontFamily="Liberation Serif, serif" fontStyle="italic" fontWeight="700" fontSize="13" textAnchor="middle" fill="#fff">i</text>
  </svg>
);

export default function App() {
  return (
    <Screen>
      <Global />
      <TopPanel />
      <Below>
        <Launcher>
          {LAUNCHER.map(({ icon: Icon, bg, glow, pips, last }, i) => (
            <Tile key={i} $bg={bg} $glow={glow} $last={last}>
              <Icon />
              {glow && <Bars />}
              {pips > 0 && <Pip />}
              {pips > 1 && <Pip $right />}
            </Tile>
          ))}
        </Launcher>
        <Browser>
          <Tabs />
          <NavToolbar />
          <Page>
            <SiteNav>
              <Brand><BrandMark /></Brand>
              <NavSide>
                <NavButton $w={144} $mr={16}>Log In</NavButton>
                <NavButton $w={160} $mr={17}>Register</NavButton>
                <NavLink $w={140}>Code</NavLink>
                <NavLink $w={121}>Art</NavLink>
                <NavLink $w={134}>Blog</NavLink>
              </NavSide>
            </SiteNav>
            <Form>
              <Heading>Log In</Heading>
              <FieldLabel>Email</FieldLabel>
              <Input $focus><Caret /></Input>
              <FieldLabel>Password</FieldLabel>
              <Input />
              <Remember><Check />Remember me</Remember>
              <Submit type="button">Submit</Submit>
              <Links><TextLink>Register</TextLink> | <TextLink>Forgot your password?</TextLink></Links>
            </Form>
          </Page>
          <Notice>
            <InfoIcon />
            <Gap $w={7} />
            <Label $track={0.14}>Firefox automatically sends some data to Mozilla so that we can improve your experience.</Label>
            <Choose><u>C</u>hoose What I Share</Choose>
            <Cross color="#6d6d6b" />
          </Notice>
        </Browser>
      </Below>
    </Screen>
  );
}
